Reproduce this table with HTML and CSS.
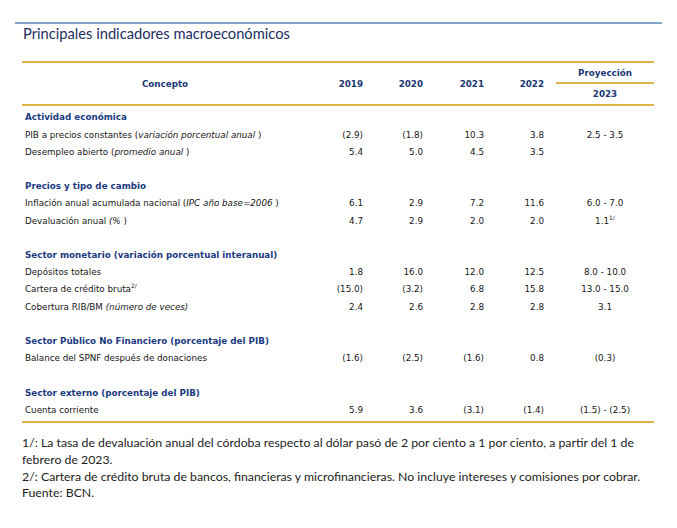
FILE: index.html
```html
<!DOCTYPE html>
<html lang="es">
<head>
<meta charset="utf-8">
<title>Principales indicadores macroeconómicos</title>
<link rel="stylesheet" href="styles.css">
</head>
<body>
<div class="page">
  <div class="topline"></div>
  <h1 class="title">Principales indicadores macroeconómicos</h1>
  <table class="tbl">
    <colgroup>
      <col class="c-label"><col class="c-y"><col class="c-y"><col class="c-y3"><col class="c-y4"><col class="c-proj">
    </colgroup>
    <thead>
      <tr class="h1">
        <th rowspan="2" class="th-concepto">Concepto</th>
        <th rowspan="2" class="num">2019</th>
        <th rowspan="2" class="num">2020</th>
        <th rowspan="2" class="num">2021</th>
        <th rowspan="2" class="num n4">2022</th>
        <th class="proj proj-top">Proyección</th>
      </tr>
      <tr class="h2">
        <th class="proj">2023</th>
      </tr>
    </thead>
    <tbody>
      <tr class="pad-top"><td colspan="6"></td></tr>
      <tr class="sec"><td colspan="6">Actividad económica</td></tr>
      <tr><td>PIB a precios constantes (<i>variación porcentual anual</i> )</td><td class="num">(2.9)</td><td class="num">(1.8)</td><td class="num">10.3</td><td class="num n4">3.8</td><td class="proj">2.5 - 3.5</td></tr>
      <tr><td>Desempleo abierto (<i>promedio anual</i> )</td><td class="num">5.4</td><td class="num">5.0</td><td class="num">4.5</td><td class="num n4">3.5</td><td class="proj"></td></tr>
      <tr class="blank"><td colspan="6"></td></tr>
      <tr class="sec"><td colspan="6">Precios y tipo de cambio</td></tr>
      <tr><td>Inflación anual acumulada nacional (<i>IPC año base=2006</i> )</td><td class="num">6.1</td><td class="num">2.9</td><td class="num">7.2</td><td class="num n4">11.6</td><td class="proj">6.0 - 7.0</td></tr>
      <tr><td>Devaluación anual <i>(%</i> )</td><td class="num">4.7</td><td class="num">2.9</td><td class="num">2.0</td><td class="num n4">2.0</td><td class="proj">1.1<sup>1/</sup></td></tr>
      <tr class="blank"><td colspan="6"></td></tr>
      <tr class="sec"><td colspan="6">Sector monetario (variación porcentual interanual)</td></tr>
      <tr><td>Depósitos totales</td><td class="num">1.8</td><td class="num">16.0</td><td class="num">12.0</td><td class="num n4">12.5</td><td class="proj">8.0 - 10.0</td></tr>
      <tr><td>Cartera de crédito bruta<sup>2/</sup></td><td class="num">(15.0)</td><td class="num">(3.2)</td><td class="num">6.8</td><td class="num n4">15.8</td><td class="proj">13.0 - 15.0</td></tr>
      <tr><td>Cobertura RIB/BM <i>(número de veces)</i></td><td class="num">2.4</td><td class="num">2.6</td><td class="num">2.8</td><td class="num n4">2.8</td><td class="proj">3.1</td></tr>
      <tr class="blank"><td colspan="6"></td></tr>
      <tr class="sec"><td colspan="6">Sector Público No Financiero (porcentaje del PIB)</td></tr>
      <tr><td>Balance del SPNF después de donaciones</td><td class="num">(1.6)</td><td class="num">(2.5)</td><td class="num">(1.6)</td><td class="num n4">0.8</td><td class="proj">(0.3)</td></tr>
      <tr class="blank"><td colspan="6"></td></tr>
      <tr class="sec"><td colspan="6">Sector externo (porcentaje del PIB)</td></tr>
      <tr><td>Cuenta corriente</td><td class="num">5.9</td><td class="num">3.6</td><td class="num">(3.1)</td><td class="num n4">(1.4)</td><td class="proj">(1.5) - (2.5)</td></tr>
      <tr class="pad-bot"><td colspan="6"></td></tr>
    </tbody>
  </table>
  <div class="notes">
    <p>1/: La tasa de devaluación anual del córdoba respecto al dólar pasó de 2 por ciento a 1 por ciento, a partir del 1 de febrero de 2023.</p>
    <p>2/: Cartera de crédito bruta de bancos, financieras y microfinancieras. No incluye intereses y comisiones por cobrar.</p>
    <p>Fuente: BCN.</p>
  </div>
</div>
</body>
</html>
```

FILE: styles.css
```css
html, body {
  margin: 0;
  padding: 0;
  background: #ffffff;
}

.page {
  width: 677px;
  height: 528px;
  padding-top: 22px;
  box-sizing: border-box;
}

.topline {
  margin-left: 15px;
  width: 647px;
  border-top: 2px solid #7fa3c8;
}

.title {
  margin: 0 0 0 23px;
  font-family: "Lato", "Open Sans", sans-serif;
  font-weight: 400;
  font-size: 14.7px;
  line-height: 19px;
  color: #1c3062;
}

.tbl {
  margin: 18px 0 0 22px;
  width: 632px;
  table-layout: fixed;
  border-collapse: collapse;
  font-family: "DejaVu Sans", Verdana, sans-serif;
  font-size: 8.75px;
  color: #151515;
}

.c-label { width: 286px; }
.c-y { width: 60px; }
.c-y3 { width: 61px; }
.c-y4 { width: 67px; }
.c-proj { width: 98px; }

.tbl thead tr.h1 {
  border-top: 2px solid #e0b34c;
}

.tbl thead tr.h2 {
  border-bottom: 2px solid #e0b34c;
}

.tbl th {
  font-weight: bold;
  color: #1b3674;
  padding: 0;
  vertical-align: middle;
}

.tbl .h1 th { height: 19px; }
.tbl .h2 th { height: 20px; }

.th-concepto { text-align: center; }

.tbl th.proj-top {
  border-bottom: 2px solid #e0b34c;
}

.tbl td {
  padding: 0 0 0 3px;
  height: 17.2px;
  line-height: 17.2px;
  white-space: nowrap;
}

.tbl .num {
  text-align: right;
  padding-right: 5px;
}

.tbl .n4 {
  padding-right: 12px;
}

.tbl .proj {
  text-align: center;
  padding: 0;
}

.tbl tr.sec td {
  font-weight: bold;
  color: #1b3a80;
}

.tbl tr.pad-top td {
  height: 3.4px;
  line-height: 0;
}

.tbl tr.pad-bot {
  border-bottom: 2px solid #e0b34c;
}

.tbl tr.pad-bot td {
  height: 2px;
  line-height: 0;
}

.tbl sup {
  font-size: 6px;
  line-height: 0;
  vertical-align: 4px;
}

.notes {
  margin: 12px 0 0 22px;
  width: 640px;
  font-family: "Lato", "Open Sans", sans-serif;
  font-size: 12.3px;
  line-height: 16.8px;
  color: #222222;
}

.notes p {
  margin: 0;
}
```
